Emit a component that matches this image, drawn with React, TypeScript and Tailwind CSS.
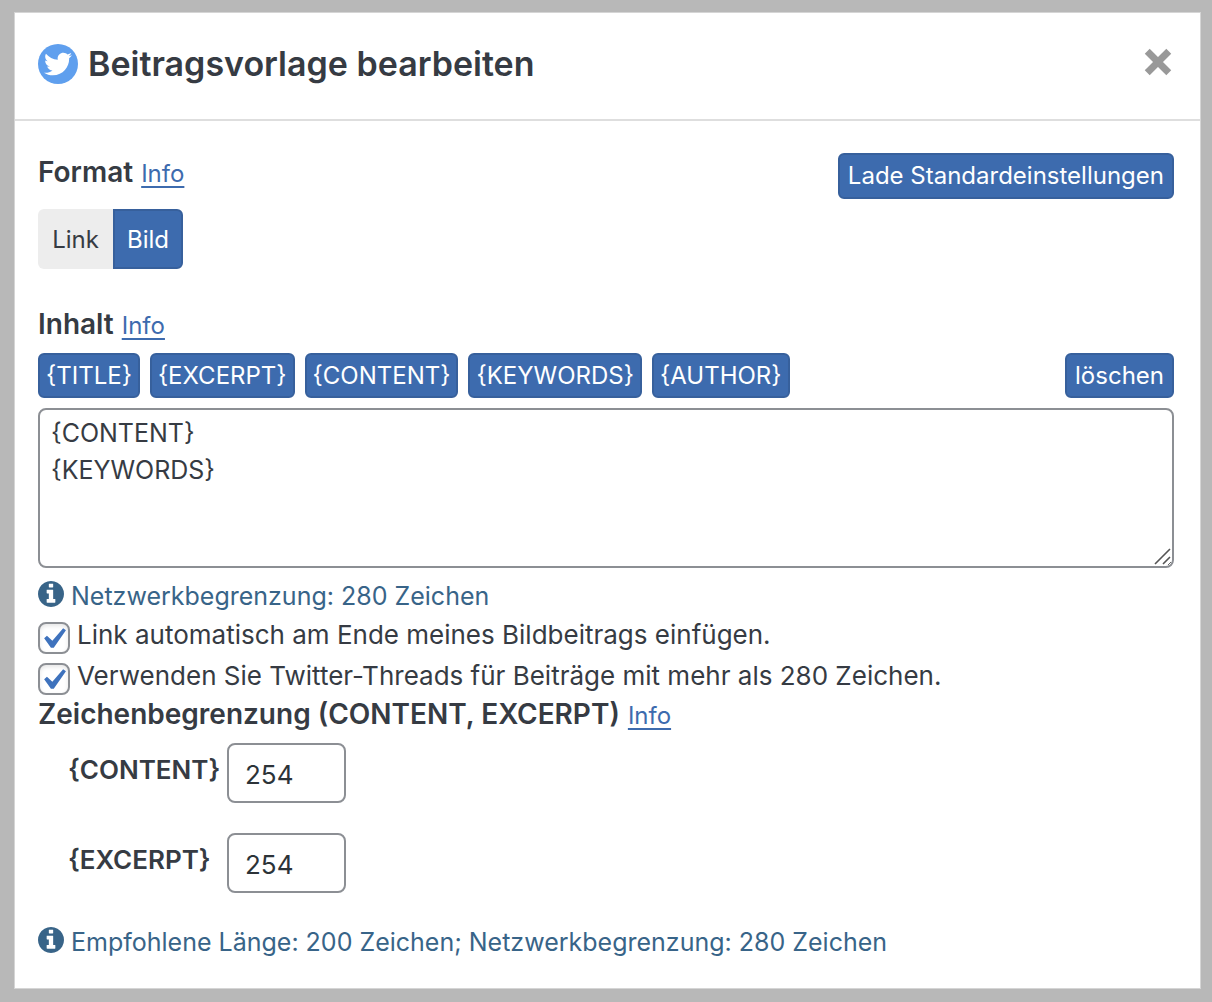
import React, { useRef, useState } from 'react';
import { FaTwitter } from 'react-icons/fa';

const placeholders = ['{TITLE}', '{EXCERPT}', '{CONTENT}', '{KEYWORDS}', '{AUTHOR}'];

const primaryButton = 'rounded-md border-2 border-[#37609c] bg-[#3d6bae] text-2xl text-white cursor-pointer';

const InfoLink = () => (
  <a href="#info" className="text-2xl font-normal text-[#3d6bae] underline decoration-2 underline-offset-4">
    Info
  </a>
);

const SectionTitle = ({ children }: { children: React.ReactNode }) => (
  <h2 className="flex items-baseline gap-2 text-[28px] leading-[38px] font-semibold">
    {children}
    <InfoLink />
  </h2>
);

const InfoIcon = () => (
  <svg viewBox="128 128 1536 1536" className="mt-[3px] size-[26px] shrink-0" fill="currentColor" aria-hidden="true">
    <path d="M1152 1376v-160q0-14-9-23t-23-9h-96v-512q0-14-9-23t-23-9h-320q-14 0-23 9t-9 23v160q0 14 9 23t23 9h96v320h-96q-14 0-23 9t-9 23v160q0 14 9 23t23 9h448q14 0 23-9t9-23zm-128-896v-160q0-14-9-23t-23-9h-192q-14 0-23 9t-9 23v160q0 14 9 23t23 9h192q14 0 23-9t9-23zm640 416q0 209-103 385.500t-279.500 279.500-385.500 103-385.500-103-279.500-279.500-103-385.500 103-385.500 279.500-279.500 385.500-103 385.500 103 279.500 279.500 103 385.500z" />
  </svg>
);

const Note = ({ children }: { children: React.ReactNode }) => (
  <p className="flex items-start gap-[7px] text-[25px] leading-9 text-[#386488]">
    <InfoIcon />
    {children}
  </p>
);

const CheckOption = ({ id, label }: { id: string; label: string }) => (
  <div className="flex items-start gap-[7px]">
    <span className="relative mt-1 size-8 shrink-0">
      <input
        id={id}
        type="checkbox"
        defaultChecked
        className="peer block size-8 appearance-none rounded-lg border-2 border-[#8c8f94] bg-white shadow-[inset_0_2px_4px_rgba(0,0,0,0.1)]"
      />
      <svg
        viewBox="0 0 20 20"
        className="pointer-events-none absolute -top-1 -left-1.5 hidden size-[42px] max-w-none fill-[#3e72bd] peer-checked:block"
        aria-hidden="true"
      >
        <path d="M14.83 4.89l1.34.94-5.81 8.38H9.02L5.78 9.67l1.34-1.25 2.57 2.4z" />
      </svg>
    </span>
    <label htmlFor={id} className="text-[26px] leading-[34px]">
      {label}
    </label>
  </div>
);

const LimitField = ({ id, label }: { id: string; label: string }) => (
  <div className="flex items-start">
    <label htmlFor={id} className="mt-2 w-[159px] text-[26px] leading-[38px] font-semibold">
      {label}
    </label>
    <input
      id={id}
      type="text"
      inputMode="numeric"
      defaultValue="254"
      className="h-[60px] w-[119px] rounded-lg border-2 border-[#8c8f94] px-4 pt-0.5 text-[26px] text-[#2c3338]"
    />
  </div>
);

const App = () => {
  const [format, setFormat] = useState<'link' | 'image'>('image');
  const [content, setContent] = useState('{CONTENT}\n{KEYWORDS}');
  const textRef = useRef<HTMLTextAreaElement>(null);

  const insert = (value: string) => {
    setContent((prev) => prev + value);
    textRef.current?.focus();
  };

  return (
    <div className="min-h-screen bg-[#b8b8b8] pt-3 pr-[11px] pb-[13px] pl-[14px] font-[Inter,'Liberation_Sans',sans-serif] text-[#363b43]">
      <div role="dialog" aria-labelledby="dialog-title" className="border border-[#d5d5d5] bg-white">
        <header className="flex h-[108px] items-center justify-between border-b-2 border-[#dedede] pr-7 pb-1 pl-[23px]">
          <div className="flex items-center gap-2.5">
            <span className="flex size-10 items-center justify-center rounded-full bg-[#5f9fee]">
              <FaTwitter className="size-7 text-white" aria-hidden="true" />
            </span>
            <h1 id="dialog-title" className="text-[34px] leading-10 font-semibold">
              Beitragsvorlage bearbeiten
            </h1>
          </div>
          <button type="button" aria-label="Schließen" className="mb-1 cursor-pointer">
            <svg viewBox="0 0 26 26" className="size-7" fill="none" stroke="#999" strokeWidth="6.5">
              <path d="M3 3l20 20M23 3L3 23" />
            </svg>
          </button>
        </header>

        <div className="pt-8 pr-[26px] pb-7 pl-[23px]">
          <div className="flex items-start justify-between">
            <SectionTitle>Format</SectionTitle>
            <button type="button" className={`${primaryButton} h-[46px] px-2`}>
              Lade Standardeinstellungen
            </button>
          </div>

          <div role="group" aria-label="Format" className="mt-2.5 flex h-[60px] text-2xl">
            <button
              type="button"
              aria-pressed={format === 'link'}
              onClick={() => setFormat('link')}
              className={`w-[75px] cursor-pointer rounded-l-md pt-0.5 ${
                format === 'link' ? 'border-2 border-[#37609c] bg-[#3d6bae] text-white' : 'bg-[#ededed]'
              }`}
            >
              Link
            </button>
            <button
              type="button"
              aria-pressed={format === 'image'}
              onClick={() => setFormat('image')}
              className={`w-[70px] cursor-pointer rounded-r-md pt-0.5 ${
                format === 'image' ? 'border-2 border-[#37609c] bg-[#3d6bae] text-white' : 'bg-[#ededed]'
              }`}
            >
              Bild
            </button>
          </div>

          <div className="mt-9">
            <SectionTitle>Inhalt</SectionTitle>
          </div>

          <div className="mt-2.5 flex flex-wrap gap-2.5">
            {placeholders.map((item) => (
              <button
                key={item}
                type="button"
                onClick={() => insert(item)}
                className={`${primaryButton} h-[45px] px-1.5`}
              >
                {item}
              </button>
            ))}
            <button type="button" onClick={() => setContent('')} className={`${primaryButton} ml-auto h-[45px] px-2`}>
              löschen
            </button>
          </div>

          <div className="relative mt-2.5">
            <textarea
              ref={textRef}
              aria-label="Inhalt"
              value={content}
              onChange={(e) => setContent(e.target.value)}
              className="block h-[160px] w-full resize-y rounded-lg border-2 border-[#8c8f94] px-[11px] py-[5px] text-[25px] leading-[37px]"
            />
            {/* larger grip drawn over the native one */}
            <svg
              viewBox="0 0 18 18"
              className="pointer-events-none absolute right-[3px] bottom-[3px] size-[18px]"
              fill="none"
              stroke="#555"
              strokeWidth="1.6"
              aria-hidden="true"
            >
              <path d="M0 0h18v13l-5 5H0z" fill="#fff" stroke="none" />
              <path d="M2 17L17 2M10 17l7-7" />
            </svg>
          </div>

          <div className="mt-2.5">
            <Note>Netzwerkbegrenzung: 280 Zeichen</Note>
          </div>

          <div className="mt-1 flex flex-col gap-[5px]">
            <CheckOption id="add-link" label="Link automatisch am Ende meines Bildbeitrags einfügen." />
            <CheckOption
              id="use-threads"
              label="Verwenden Sie Twitter-Threads für Beiträge mit mehr als 280 Zeichen."
            />
          </div>

          <SectionTitle>Zeichenbegrenzung (CONTENT, EXCERPT)</SectionTitle>

          <div className="mt-2.5 flex flex-col gap-[30px] pl-[30px]">
            <LimitField id="limit-content" label="{CONTENT}" />
            <LimitField id="limit-excerpt" label="{EXCERPT}" />
          </div>

          <div className="mt-[31px]">
            <Note>Empfohlene Länge: 200 Zeichen; Netzwerkbegrenzung: 280 Zeichen</Note>
          </div>
        </div>
      </div>
    </div>
  );
};

export default App;
